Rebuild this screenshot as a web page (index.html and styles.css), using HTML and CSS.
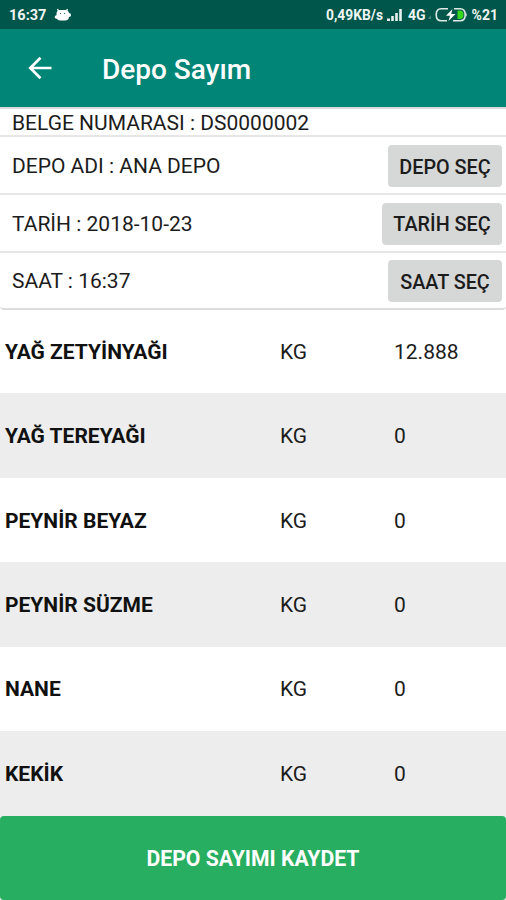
FILE: index.html
```
<!DOCTYPE html>
<html lang="tr">
<head>
    <meta charset="UTF-8">
    <meta name="viewport" content="width=device-width, initial-scale=1.0">
    <title>Depo Sayım</title>
    <link rel="stylesheet" href="styles.css">
</head>
<body>
    <div class="status-bar">
        <span class="clock">16:37</span>
        <svg class="android" width="18" height="14" viewBox="0 0 18 14">
            <path d="M3.5 1l1.5 3M13.5 1l-1.5 3" stroke="#fff" stroke-width="1.3"/>
            <rect x="2.5" y="2" width="12.5" height="10.5" rx="4" fill="#fff"/>
            <circle cx="2.4" cy="9" r="1.7" fill="#fff"/>
            <circle cx="15" cy="7" r="2" fill="#fff"/>
            <circle cx="6.5" cy="5.5" r=".6" fill="#00564a"/>
            <circle cx="10.6" cy="5.5" r=".6" fill="#00564a"/>
        </svg>
        <span class="speed">0,49KB/s</span>
        <svg class="signal" width="16" height="14" viewBox="0 0 16 14" fill="#e6f0ee">
            <rect x="0" y="10.5" width="3" height="2.5"/>
            <rect x="4.2" y="8" width="2.6" height="5"/>
            <rect x="8.2" y="5" width="2.6" height="8"/>
            <rect x="12.2" y="1" width="2.6" height="12"/>
        </svg>
        <span class="network">4G</span>
        <svg class="roaming" width="5" height="6" viewBox="0 0 5 6">
            <path d="M1 5L4 1V5z" fill="#4c8a81"/>
        </svg>
        <svg class="battery" width="33" height="16" viewBox="0 0 33 16">
            <path d="M13 1.7H6.2q-5 0-5 6t5 6H12M19 1.7h6.2q5 0 5 6t-5 6H18" fill="none" stroke="#dfe9e7" stroke-width="1.6"/>
            <path d="M31 5.5q1.5 2.2 0 4.5z" fill="#dfe9e7"/>
            <path d="M22.5 3.5h2.5q3.5 0 3.5 4.2t-3.5 4.2h-2.5z" fill="#35d61c"/>
            <path d="M17.5 2L11 8.8h4L13.5 14L20.5 7h-4.3z" fill="#fff"/>
        </svg>
        <span class="percent">%21</span>
    </div>

    <div class="app-bar">
        <svg class="back" width="24" height="24" viewBox="0 0 24 24">
            <path d="M12.5 1.8L2.3 12L12.5 22.2M2.8 12H23.5" fill="none" stroke="#fff" stroke-width="2.7"/>
        </svg>
        <h1>Depo Sayım</h1>
    </div>

    <div class="info">
        <div class="info-row first"><span class="label">BELGE NUMARASI : DS0000002</span></div>
        <div class="info-row">
            <span class="label">DEPO ADI : ANA DEPO</span>
            <button class="pick depo">DEPO SEÇ</button>
        </div>
        <div class="info-row">
            <span class="label">TARİH : 2018-10-23</span>
            <button class="pick tarih">TARİH SEÇ</button>
        </div>
        <div class="info-row last">
            <span class="label">SAAT : 16:37</span>
            <button class="pick saat">SAAT SEÇ</button>
        </div>
    </div>

    <div class="items">
        <div class="item"><b>YAĞ ZETYİNYAĞI</b><span>KG</span><span>12.888</span></div>
        <div class="item"><b>YAĞ TEREYAĞI</b><span>KG</span><span>0</span></div>
        <div class="item"><b>PEYNİR BEYAZ</b><span>KG</span><span>0</span></div>
        <div class="item"><b>PEYNİR SÜZME</b><span>KG</span><span>0</span></div>
        <div class="item"><b>NANE</b><span>KG</span><span>0</span></div>
        <div class="item"><b>KEKİK</b><span>KG</span><span>0</span></div>
    </div>

    <div class="footer">
        <button class="save">DEPO SAYIMI KAYDET</button>
    </div>
</body>
</html>
```

FILE: styles.css
```
* {
    box-sizing: border-box;
}
body {
    margin: 0;
    height: 900px;
    display: flex;
    flex-direction: column;
    overflow: hidden;
    background: #fff;
    color: #1c1c1c;
    font-family: Roboto, Arial, sans-serif;
    font-size: 21px;
}
button {
    border: 0;
    font-family: inherit;
    white-space: nowrap;
}
.status-bar {
    height: 29px;
    flex: none;
    display: flex;
    align-items: center;
    padding: 1px 8px 0 9px;
    background: #00564a;
    color: #eef5f3;
    font-size: 14.5px;
    font-weight: 700;
    white-space: nowrap;
}
.android { margin-left: 8px; }
.speed { margin-left: auto; font-size: 13.8px; }
.signal { margin-left: 4px; }
.network { margin-left: 5px; font-size: 14px; }
.roaming { margin: 4px 0 0 1px; }
.battery { margin-left: 3px; }
.percent { margin-left: 4px; font-size: 14px; }
.app-bar {
    height: 78px;
    flex: none;
    display: flex;
    align-items: center;
    background: #008577;
    color: #fff;
    padding-left: 28px;
}
.app-bar h1 {
    margin: 3px 0 0 50px;
    font-size: 28px;
    font-weight: 500;
}
.info {
    height: 203px;
    flex: none;
    border-bottom: 2px solid #dcdcdc;
    border-radius: 0 0 4px 4px;
    box-shadow: inset 0 3px 1px -1px #d8d8d8;
}
.info-row {
    height: 57.7px;
    display: flex;
    align-items: center;
    justify-content: space-between;
    padding: 2px 4px 0 12px;
    border-bottom: 2px solid #e6e6e6;
}
.info-row.first {
    height: 30.4px;
    padding-top: 3px;
}
.info-row.last {
    height: 57px;
    padding-top: 0;
    border-bottom: 0;
}
.pick {
    height: 42px;
    padding: 2px 0 0;
    border-radius: 4px;
    background: #d6d7d7;
    color: #1c1c1c;
    font-size: 19.8px;
    font-weight: 500;
}
.depo { width: 114px; }
.tarih { width: 120px; }
.saat { width: 114px; }
.items {
    margin-top: -1px;
}
.item {
    height: 84.45px;
    display: grid;
    grid-template-columns: 275px 114px 1fr;
    align-items: center;
    padding: 1px 0 0 5px;
}
.item:nth-child(even) {
    background: #ededed;
}
.item b {
    color: #111;
    font-size: 21px;
}
.footer {
    flex: 1;
    background: #ededed;
}
.save {
    display: block;
    width: 100%;
    height: 100%;
    padding: 2px 0 0;
    border-radius: 4px;
    background: #27ae60;
    color: #fff;
    font-size: 21.2px;
    font-weight: 700;
}
```
